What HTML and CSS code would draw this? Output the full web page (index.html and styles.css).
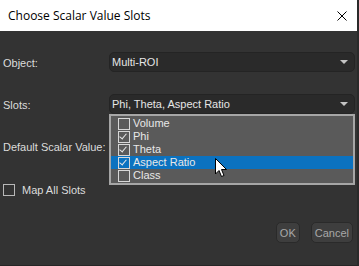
FILE: index.html
```html
<!DOCTYPE html>
<html>
  <head>
    <title>Choose Scalar Value Slots</title>
    <link rel="stylesheet" href="styles.css">
  </head>
  <body>
    <div class="window">
      <div class="titlebar">
        <span class="title">Choose Scalar Value Slots</span>
        <svg class="close" width="10" height="10" viewBox="0 0 10 10">
          <path d="M0.5 0.5 L9.5 9.5 M9.5 0.5 L0.5 9.5" stroke="#000" stroke-width="1"/>
        </svg>
      </div>
      <div class="content">
        <div class="form">
          <label class="label">Object:</label>
          <div class="combo">
            <span>Multi-ROI</span>
            <span class="arrow"></span>
          </div>
          <label class="label">Slots:</label>
          <div class="combo">
            <span>Phi, Theta, Aspect Ratio</span>
            <span class="arrow"></span>
          </div>
          <label class="label">Default Scalar Value:</label>
          <div class="field"></div>
        </div>
        <div class="map-all">
          <span class="box"></span>
          <span>Map All Slots</span>
        </div>
        <div class="buttons">
          <button class="btn">OK</button>
          <button class="btn">Cancel</button>
        </div>
      </div>
      <div class="popup">
        <div class="item"><span class="check"></span>Volume</div>
        <div class="item"><span class="check checked"></span>Phi</div>
        <div class="item"><span class="check checked"></span>Theta</div>
        <div class="item selected"><span class="check checked"></span>Aspect Ratio</div>
        <div class="item"><span class="check"></span>Class</div>
      </div>
      <svg class="cursor" width="13" height="20" viewBox="0 0 13 20">
        <path d="M0.5 0.5 L0.5 16 L4 12.5 L6.5 18.5 L9 17.5 L6.5 11.5 L11.5 11.5 Z" fill="#fff" stroke="#000" stroke-width="1"/>
      </svg>
    </div>
  </body>
</html>
```

FILE: styles.css
```css
body {
  margin: 0;
  font-family: "Liberation Sans", Arial, sans-serif;
  font-size: 11px;
  background-color: #2b2b2b;
}
.window {
  position: relative;
  width: 357px;
  height: 265px;
  background-color: #333333;
  border-right: 2px solid #2a2a2a;
  border-bottom: 1px solid #262626;
  overflow: hidden;
}
.titlebar {
  height: 31px;
  background-color: #ffffff;
  display: flex;
  align-items: center;
  justify-content: space-between;
  padding: 0 10px 0 8px;
  font-family: "Open Sans", "Liberation Sans", sans-serif;
  font-size: 12px;
  color: #000;
}
.title {
  margin-top: -1px;
}
.content {
  display: flex;
  flex-direction: column;
  padding: 21px 0 0 3px;
  color: #dcdcdc;
}
.form {
  display: grid;
  grid-template-columns: 106px 1fr;
  grid-auto-rows: 20px;
  row-gap: 22px;
  align-items: center;
  padding-right: 2px;
}
.label {
  margin-top: 1px;
}
.combo {
  height: 18px;
  display: flex;
  align-items: center;
  justify-content: space-between;
  padding: 0 6px 0 2px;
  background-color: #2a2a2a;
  border: 1px solid #242424;
  border-radius: 5px;
  color: #e6e6e6;
}
.arrow {
  width: 0;
  height: 0;
  border-left: 4px solid transparent;
  border-right: 4px solid transparent;
  border-top: 4px solid #c4c4c4;
}
.field {
  height: 18px;
}
.map-all {
  display: flex;
  align-items: center;
  gap: 7px;
  margin-top: 27px;
  height: 14px;
}
.box {
  width: 10px;
  height: 10px;
  border: 1px solid #b8b8b8;
  background-color: #333;
}
.buttons {
  display: flex;
  justify-content: flex-end;
  gap: 11px;
  margin-top: 25px;
  padding-right: 4px;
}
.btn {
  height: 21px;
  padding: 0 3px;
  font-family: inherit;
  font-size: 11px;
  color: #a8a8a8;
  background-color: #3e3e3e;
  border: 1px solid #2a2a2a;
  border-radius: 5px;
}
.popup {
  position: absolute;
  left: 109px;
  top: 114px;
  width: 242px;
  padding: 1px 0;
  background-color: #5a5a5a;
  border: 2px solid #a6a6a6;
  color: #e8e8e8;
}
.item {
  display: flex;
  align-items: center;
  height: 13px;
  line-height: 13px;
  padding-left: 7px;
  gap: 3px;
}
.item.selected {
  background-color: #0b72c0;
}
.check {
  position: relative;
  width: 10px;
  height: 10px;
  border: 1px solid #d8d8d8;
}
.check.checked::after {
  content: "";
  position: absolute;
  left: 2px;
  top: 0px;
  width: 3px;
  height: 6px;
  border-right: 1px solid #e8e8e8;
  border-bottom: 1px solid #e8e8e8;
  transform: rotate(40deg);
}
.cursor {
  position: absolute;
  left: 215px;
  top: 158px;
}
```
